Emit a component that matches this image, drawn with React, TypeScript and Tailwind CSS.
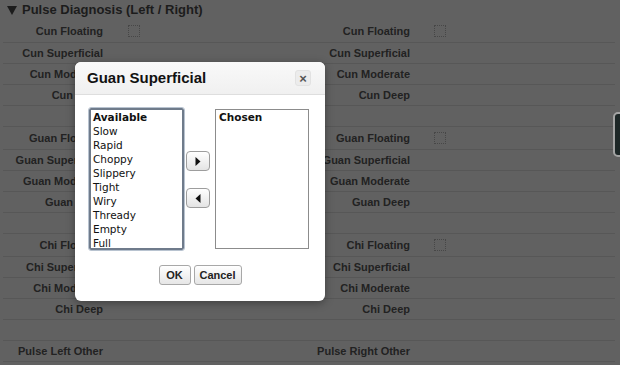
import React from "react";

type Row = { left: string; right: string; check?: boolean };

const rows: Row[] = [
  { left: "Cun Floating", right: "Cun Floating", check: true },
  { left: "Cun Superficial", right: "Cun Superficial" },
  { left: "Cun Moderate", right: "Cun Moderate" },
  { left: "Cun Deep", right: "Cun Deep" },
  { left: "", right: "" },
  { left: "Guan Floating", right: "Guan Floating", check: true },
  { left: "Guan Superficial", right: "Guan Superficial" },
  { left: "Guan Moderate", right: "Guan Moderate" },
  { left: "Guan Deep", right: "Guan Deep" },
  { left: "", right: "" },
  { left: "Chi Floating", right: "Chi Floating", check: true },
  { left: "Chi Superficial", right: "Chi Superficial" },
  { left: "Chi Moderate", right: "Chi Moderate" },
  { left: "Chi Deep", right: "Chi Deep" },
  { left: "", right: "" },
  { left: "Pulse Left Other", right: "Pulse Right Other" },
];

const available = ["Slow", "Rapid", "Choppy", "Slippery", "Tight", "Wiry", "Thready", "Empty", "Full"];

const Checkbox = () => (
  <span className="inline-block w-[12px] h-[12px] border border-dotted border-[#474747]" />
);

const ArrowButton = ({ dir }: { dir: "left" | "right" }) => (
  <button className="w-[24px] h-[20px] flex items-center justify-center rounded-[4px] border border-[#9d9d9d] bg-gradient-to-b from-white to-[#e4e4e4]">
    <svg width="6" height="9" viewBox="0 0 6 9">
      {dir === "right" ? <path d="M0.5 0 L5.5 4.5 L0.5 9 Z" fill="#111" /> : <path d="M5.5 0 L0.5 4.5 L5.5 9 Z" fill="#111" />}
    </svg>
  </button>
);

export default function App() {
  return (
    <div className="relative w-[620px] h-[365px] overflow-hidden bg-[#616161] font-['Liberation_Sans',Arial,sans-serif]">
      {/* page behind overlay */}
      <div className="h-[20px] flex items-center pl-[7px] text-[13px] font-bold text-[#1c1c1c]">
        <svg width="10" height="9" viewBox="0 0 10 9" className="mr-[5px]">
          <path d="M0 0 L10 0 L5 9 Z" fill="#1c1c1c" />
        </svg>
        <span>Pulse Diagnosis (Left / Right)</span>
      </div>
      <div className="mx-[3px] w-[612px]">
        {rows.map((r, i) => (
          <div
            key={i}
            className={`flex items-center border-b border-[#575757] ${r.check ? "h-[23px]" : "h-[21px]"} text-[11px] font-bold text-[#222]`}
          >
            <div className="w-[307px] flex items-center">
              <span className="w-[100px] text-right whitespace-nowrap">{r.left}</span>
              {r.check && (
                <span className="ml-[25px] flex">
                  <Checkbox />
                </span>
              )}
            </div>
            <div className="flex items-center">
              <span className="w-[100px] text-right whitespace-nowrap">{r.right}</span>
              {r.check && (
                <span className="ml-[24px] flex">
                  <Checkbox />
                </span>
              )}
            </div>
          </div>
        ))}
      </div>

      {/* side tab peeking at the right edge */}
      <div className="absolute left-[613px] top-[112px] w-[12px] h-[45px] rounded-l-[5px] border-2 border-[#a3a3a3] bg-[#1d2727]" />

      {/* dialog */}
      <div className="absolute left-[75px] top-[62px] w-[250px] h-[239px] bg-white rounded-[6px] shadow-[0_2px_8px_rgba(0,0,0,0.35)] flex flex-col">
        <div className="h-[33px] shrink-0 flex items-center justify-between pl-[12px] pr-[14px] rounded-t-[6px] border-b border-[#dedede] bg-gradient-to-b from-[#f9f9f9] to-[#f0f0f0]">
          <span className="text-[15px] font-bold text-[#111]">Guan Superficial</span>
          <span className="w-[16px] h-[16px] flex items-center justify-center rounded-[3px] bg-[#ececec] border border-[#e2e2e2] text-[13px] font-bold text-[#555] leading-none">
            ×
          </span>
        </div>
        <div className="flex pl-[14px] pt-[13px] font-['DejaVu_Sans',sans-serif] text-[10.5px] leading-[14px] text-[#111]">
          <div className="w-[95px] h-[142px] border-2 border-[#6f7b8b] outline outline-1 outline-[#b8c3d0] rounded-[2px] pl-[2px] overflow-hidden">
            <div className="font-bold">Available</div>
            {available.map((a) => (
              <div key={a}>{a}</div>
            ))}
          </div>
          <div className="flex flex-col ml-[2px] pt-[43px] gap-[17px]">
            <ArrowButton dir="right" />
            <ArrowButton dir="left" />
          </div>
          <div className="ml-[5px] w-[94px] h-[140px] mt-[1px] border border-[#8c8c8c] pl-[3px]">
            <div className="font-bold">Chosen</div>
          </div>
        </div>
        <div className="flex justify-center gap-[3px] mt-[15px] text-[11px] font-bold text-[#222]">
          <button className="w-[32px] h-[20px] rounded-[3px] border border-[#a8a8a8] bg-gradient-to-b from-white to-[#e6e6e6]">OK</button>
          <button className="w-[48px] h-[20px] rounded-[3px] border border-[#a8a8a8] bg-gradient-to-b from-white to-[#e6e6e6]">Cancel</button>
        </div>
      </div>
    </div>
  );
}
